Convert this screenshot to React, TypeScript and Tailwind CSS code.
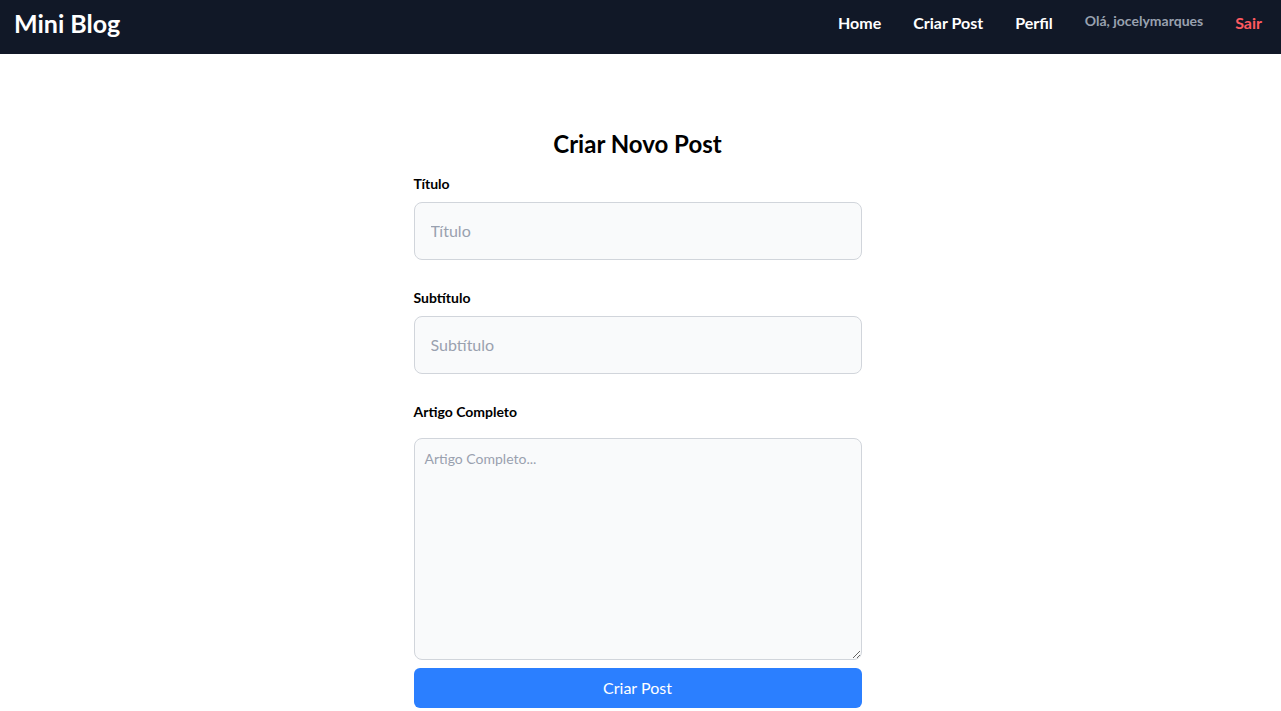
import React, { useState } from 'react';

const font = { fontFamily: '"Lato", "Noto Sans", sans-serif' };

const Navbar: React.FC = () => {
  return (
    <header className="h-[54px] bg-[#111827] flex items-center justify-between pl-[14px] pr-[19px] pb-2">
      <span className="text-white text-[25px] font-bold leading-none">Mini Blog</span>
      <nav className="flex items-center gap-8">
        <a className="text-white text-base font-bold">Home</a>
        <a className="text-white text-base font-bold">Criar Post</a>
        <a className="text-white text-base font-bold">Perfil</a>
        <span className="text-[#99a1af] text-sm font-bold -mt-1">Olá, jocelymarques</span>
        <a className="text-[#ff5a60] text-base font-bold">Sair</a>
      </nav>
    </header>
  );
};

const App: React.FC = () => {
  const [title, setTitle] = useState('');
  const [subtitle, setSubtitle] = useState('');
  const [body, setBody] = useState('');

  return (
    <div className="min-h-screen bg-white" style={font}>
      <Navbar />
      <main className="flex justify-center pt-[74px] pr-[6px]">
        <form className="w-[448px] flex flex-col" onSubmit={(e) => e.preventDefault()}>
          <h1 className="text-2xl font-bold text-center text-black mb-[14px]">Criar Novo Post</h1>

          <label className="text-sm font-bold text-black mb-2">Título</label>
          <input
            value={title}
            onChange={(e) => setTitle(e.target.value)}
            placeholder="Título"
            className="w-full px-4 py-4 text-base leading-6 bg-[#f9fafb] border border-[#d1d5db] rounded-lg placeholder:text-[#99a1af] outline-none"
          />

          <label className="text-sm font-bold text-black mt-7 mb-2">Subtítulo</label>
          <input
            value={subtitle}
            onChange={(e) => setSubtitle(e.target.value)}
            placeholder="Subtítulo"
            className="w-full px-4 py-4 text-base leading-6 bg-[#f9fafb] border border-[#d1d5db] rounded-lg placeholder:text-[#99a1af] outline-none"
          />

          <label className="text-sm font-bold text-black mt-7 mb-4">Artigo Completo</label>
          <textarea
            value={body}
            onChange={(e) => setBody(e.target.value)}
            placeholder="Artigo Completo..."
            className="w-full h-[222px] p-2.5 text-sm bg-[#f9fafb] border border-[#d1d5db] rounded-lg placeholder:text-[#99a1af] outline-none block"
          />

          <button
            type="submit"
            className="mt-2 h-10 w-full bg-[#2b7fff] text-white text-base rounded-md"
          >
            Criar Post
          </button>
        </form>
      </main>
    </div>
  );
};

export default App;
